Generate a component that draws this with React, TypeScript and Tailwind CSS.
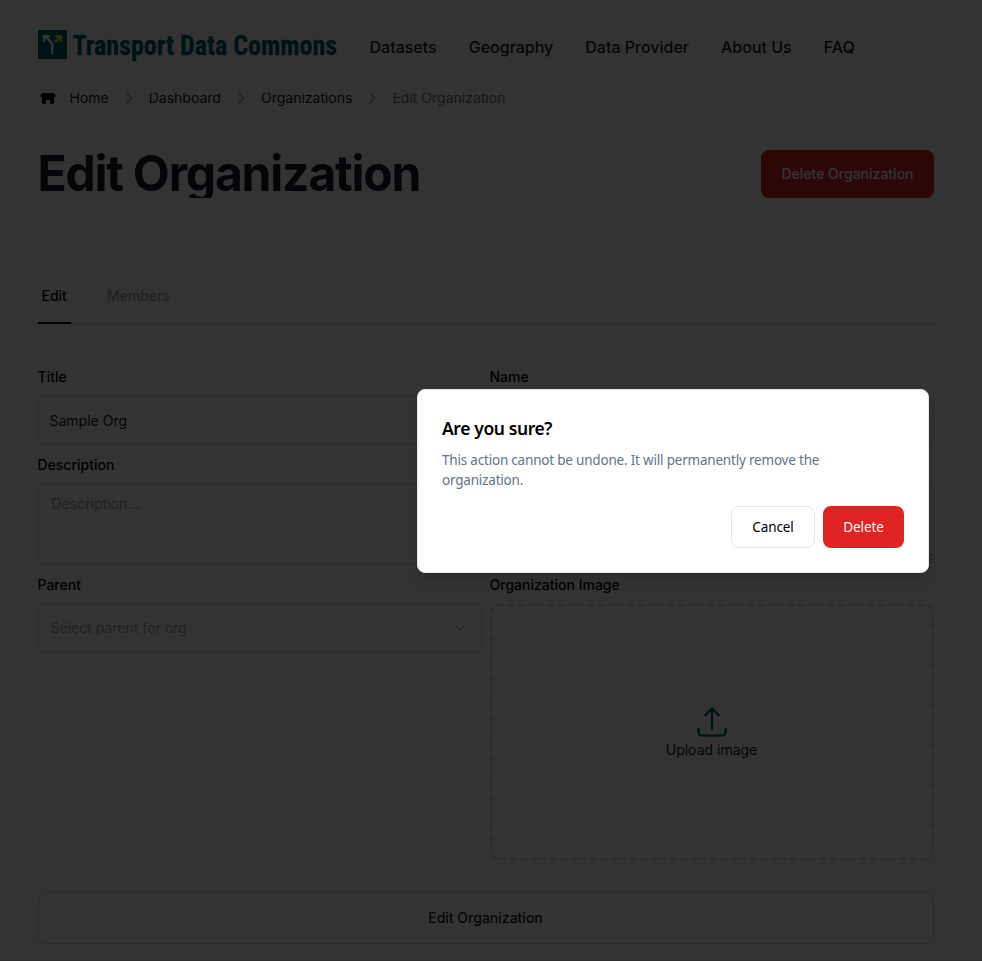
import React from "react";

const navLinks = ["Datasets", "Geography", "Data Provider", "About Us", "FAQ"];

function Logo() {
  return (
    <svg width="300" height="36" viewBox="0 0 300 36" className="block shrink-0">
      <rect width="29" height="29" fill="#006064" />
      <path
        d="M14.3 24V15.5C14.3 13.5 13 12.2 11.5 10.7L7 6.2M6 12V6.2H12"
        fill="none"
        stroke="#fff"
        strokeWidth="2.4"
      />
      <path d="M17 12.2L22.5 6.7M17.2 6.2H23V12" fill="none" stroke="#dde12c" strokeWidth="2.4" />
      <text
        x="34.6"
        y="24.5"
        textLength="264.5"
        lengthAdjust="spacingAndGlyphs"
        fill="#006064"
        stroke="#006064"
        strokeWidth="0.3"
        className="font-[Roboto,sans-serif] text-[28px] font-bold [font-stretch:80%]"
      >
        Transport Data Commons
      </text>
    </svg>
  );
}

function Chevron() {
  return (
    <svg
      width="20"
      height="20"
      viewBox="0 0 20 20"
      fill="none"
      stroke="#9ca3af"
      strokeWidth="1.5"
      strokeLinecap="round"
      strokeLinejoin="round"
      className="block"
    >
      <path d="M7.7 5l5 5-5 5" />
    </svg>
  );
}

function Breadcrumbs() {
  return (
    <nav className="flex h-5 items-center overflow-hidden text-[14px] leading-5 text-[#111928]">
      <svg width="20" height="20" viewBox="0 0 20 20" fill="#03071e" className="-mt-1 mr-3 block">
        <path d="M10.707 2.293a1 1 0 0 0-1.414 0l-7 7a1 1 0 0 0 1.414 1.414L4 10.414V17a1 1 0 0 0 1 1h2a1 1 0 0 0 1-1v-2a1 1 0 0 1 1-1h2a1 1 0 0 1 1 1v2a1 1 0 0 0 1 1h2a1 1 0 0 0 1-1v-6.586l.293.293a1 1 0 0 0 1.414-1.414l-7-7z" />
      </svg>
      <span>Home</span>
      <span className="mx-[10px]"><Chevron /></span>
      <span>Dashboard</span>
      <span className="mx-[10px]"><Chevron /></span>
      <span>Organizations</span>
      <span className="mx-[10px]"><Chevron /></span>
      <span className="text-[#6b7280]">Edit Organization</span>
    </nav>
  );
}

function Label({ children }: { children: React.ReactNode }) {
  return <div className="mb-[9px] h-5 text-[14px] leading-5 font-medium text-black">{children}</div>;
}

function Page() {
  return (
    <div className="flex h-[961px] w-[982px] flex-col border-b border-[#e5e7eb] bg-white font-[Inter,sans-serif]">
      <header className="z-10 flex h-[93px] shrink-0 bg-white pt-[30px] pl-[38px]">
        <Logo />
        <nav className="ml-[31.5px] flex h-[34px] items-center gap-8 text-base font-medium whitespace-nowrap text-[#111928]">
          {navLinks.map((l) => (
            <span key={l}>{l}</span>
          ))}
        </nav>
      </header>
      <main className="-mt-[5px] ml-[37.5px] flex w-[896px] flex-col self-start">
        <Breadcrumbs />
        <div className="mt-[42px] flex h-12 items-center justify-between">
          <h1 className="h-12 overflow-hidden text-[48px] leading-[48px] font-bold tracking-[-1.2px] text-[#111928]">
            <span className="block origin-[0_41px] scale-y-[1.03]">Edit Organization</span>
          </h1>
          <button className="h-12 w-[173px] rounded-lg bg-[#e02424] pr-1.5 pb-[2px] pl-[7px] text-[14px] font-medium text-white">
            Delete Organization
          </button>
        </div>
        <div className="mt-[74px] flex h-[52px] gap-8 border-b border-[#d1d5db] text-[14px] leading-5 font-medium">
          <div className="h-[52px] border-b-2 border-black px-1 pt-[14px] text-black">Edit</div>
          <div className="px-1 pt-[14px] text-[#9ca3af]">Members</div>
        </div>
        <div className="mt-[43px] grid grid-cols-2 gap-x-2">
          <div>
            <Label>Title</Label>
            <div className="flex h-12 items-center rounded-md border border-[#d1d5db] px-[11px] text-[14px] text-[#111928]">
              Sample Org
            </div>
          </div>
          <div>
            <Label>Name</Label>
            <div className="h-12 rounded-md border border-[#d1d5db]" />
          </div>
          <div className="mt-[11px]">
            <Label>Description</Label>
            <div className="h-20 rounded-md border border-[#d1d5db] px-[13px] py-[9px] text-[14px] leading-5 text-[#9ca3af]">
              Description...
            </div>
          </div>
          <div className="mt-[11px]">
            <Label>&nbsp;</Label>
            <div className="flex h-20 items-end justify-end rounded-md border border-[#d1d5db]">
              <svg width="10" height="10" viewBox="0 0 10 10" stroke="#555" className="block">
                <path d="M1 9L9 1M5 9L9 5" />
              </svg>
            </div>
          </div>
          <div className="mt-[11px]">
            <Label>Parent</Label>
            <div className="flex h-12 items-center justify-between rounded-md border border-[#d1d5db] pr-[13px] pl-3 text-[14px] text-[#9ca3af]">
              <span className="pb-[2px]">Select parent for org</span>
              <svg width="16" height="16" viewBox="0 0 24 24" fill="none" stroke="#d1d5db" strokeWidth="2" strokeLinecap="round" strokeLinejoin="round">
                <path d="m6 9 6 6 6-6" />
              </svg>
            </div>
          </div>
          <div className="mt-[11px]">
            <Label>Organization Image</Label>
            <div className="flex h-64 flex-col items-center justify-center rounded-lg border-2 border-dashed border-[#d1d5db] text-[14px] leading-5 text-[#111928]">
              <svg width="36" height="36" viewBox="0 0 24 24" fill="none" stroke="#006064" strokeWidth="1.5" strokeLinecap="round" strokeLinejoin="round">
                <path d="M3 16.5v2.25A2.25 2.25 0 0 0 5.25 21h13.5A2.25 2.25 0 0 0 21 18.75V16.5m-13.5-9L12 3m0 0 4.5 4.5M12 3v13.5" />
              </svg>
              Upload image
            </div>
          </div>
        </div>
        <button className="mt-8 h-[52px] rounded-lg border border-[#d1d5db] pb-[2px] text-[14px] font-medium text-[#111928]">
          Edit Organization
        </button>
      </main>
    </div>
  );
}

function ConfirmDialog() {
  return (
    <div className="absolute top-[389px] left-[417px] z-30 h-[184px] w-[512px] rounded-lg border border-[#e5e7eb] bg-white p-6 font-['Noto_Sans',sans-serif] shadow-lg">
      <h2 className="text-[17.5px] leading-7 font-semibold tracking-[-0.4px] text-black">Are you sure?</h2>
      <p className="mt-2 pr-8 text-[13.5px] leading-5 tracking-[-0.2px] text-[#64748b]">
        This action cannot be undone. It will permanently remove the organization.
      </p>
      <div className="mt-4 flex justify-end gap-2 text-[13.5px] tracking-[-0.1px]">
        <button className="h-[42px] w-[84px] rounded-lg border border-[#e5e7eb] pt-px text-black">Cancel</button>
        <button className="h-[42px] w-[81px] rounded-lg bg-[#e02424] pt-px text-white">Delete</button>
      </div>
    </div>
  );
}

export default function App() {
  return (
    <div className="relative h-[961px] w-[982px] overflow-hidden">
      <Page />
      <div className="absolute inset-0 z-20 bg-black/80" />
      <ConfirmDialog />
    </div>
  );
}
